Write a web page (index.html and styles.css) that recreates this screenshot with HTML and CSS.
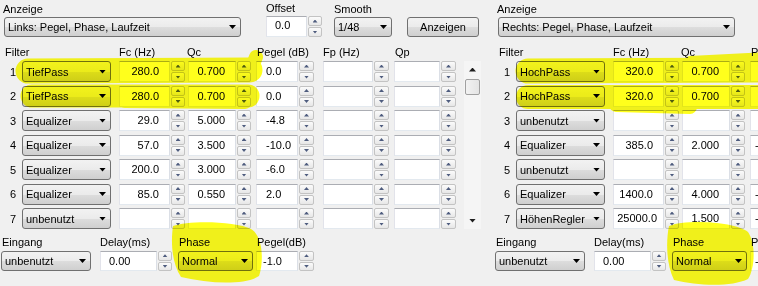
FILE: index.html
```html
<!DOCTYPE html>
<html lang="de">
<head>
<meta charset="utf-8">
<title>Filter</title>
<link rel="stylesheet" href="styles.css">
</head>
<body>
<div class="app">
  <section class="panel">
    <div class="top">
      <div class="field f-anz"><span class="lbl">Anzeige</span><div class="combo w-anz"><span>Links: Pegel, Phase, Laufzeit</span><i class="arr"></i></div></div>
      <div class="field f-off"><span class="lbl">Offset</span><div class="spin s-top"><div class="box w-off pl8">0.0</div><div class="btns"><b class="up"></b><b class="dn"></b></div></div></div>
      <div class="field f-smo"><span class="lbl">Smooth</span><div class="combo w-smo"><span>1/48</span><i class="arr"></i></div></div>
      <button class="btn" type="button">Anzeigen</button>
    </div>
    <div class="hdr"><span class="h-filter">Filter</span><span class="h-fc">Fc (Hz)</span><span class="h-qc">Qc</span><span class="h-pg">Pegel (dB)</span><span class="h-fp">Fp (Hz)</span><span class="h-qp">Qp</span></div>
    <div class="table">
      <div class="rows">
        <div class="row"><span class="num">1</span><div class="combo c-filt"><span>TiefPass</span><i class="arr"></i></div><div class="spin fc"><div class="box r">280.0</div><div class="btns"><b class="up"></b><b class="dn"></b></div></div><div class="spin qc"><div class="box r">0.700</div><div class="btns"><b class="up"></b><b class="dn"></b></div></div><div class="spin pg"><div class="box">0.0</div><div class="btns"><b class="up"></b><b class="dn"></b></div></div><div class="spin fp"><div class="box"></div><div class="btns"><b class="up"></b><b class="dn"></b></div></div><div class="spin qp"><div class="box"></div><div class="btns"><b class="up"></b><b class="dn"></b></div></div></div>
        <div class="row"><span class="num">2</span><div class="combo c-filt"><span>TiefPass</span><i class="arr"></i></div><div class="spin fc"><div class="box r">280.0</div><div class="btns"><b class="up"></b><b class="dn"></b></div></div><div class="spin qc"><div class="box r">0.700</div><div class="btns"><b class="up"></b><b class="dn"></b></div></div><div class="spin pg"><div class="box">0.0</div><div class="btns"><b class="up"></b><b class="dn"></b></div></div><div class="spin fp"><div class="box"></div><div class="btns"><b class="up"></b><b class="dn"></b></div></div><div class="spin qp"><div class="box"></div><div class="btns"><b class="up"></b><b class="dn"></b></div></div></div>
        <div class="row"><span class="num">3</span><div class="combo c-filt"><span>Equalizer</span><i class="arr"></i></div><div class="spin fc"><div class="box r">29.0</div><div class="btns"><b class="up"></b><b class="dn"></b></div></div><div class="spin qc"><div class="box r">5.000</div><div class="btns"><b class="up"></b><b class="dn"></b></div></div><div class="spin pg"><div class="box">-4.8</div><div class="btns"><b class="up"></b><b class="dn"></b></div></div><div class="spin fp"><div class="box"></div><div class="btns"><b class="up"></b><b class="dn"></b></div></div><div class="spin qp"><div class="box"></div><div class="btns"><b class="up"></b><b class="dn"></b></div></div></div>
        <div class="row"><span class="num">4</span><div class="combo c-filt"><span>Equalizer</span><i class="arr"></i></div><div class="spin fc"><div class="box r">57.0</div><div class="btns"><b class="up"></b><b class="dn"></b></div></div><div class="spin qc"><div class="box r">3.500</div><div class="btns"><b class="up"></b><b class="dn"></b></div></div><div class="spin pg"><div class="box">-10.0</div><div class="btns"><b class="up"></b><b class="dn"></b></div></div><div class="spin fp"><div class="box"></div><div class="btns"><b class="up"></b><b class="dn"></b></div></div><div class="spin qp"><div class="box"></div><div class="btns"><b class="up"></b><b class="dn"></b></div></div></div>
        <div class="row"><span class="num">5</span><div class="combo c-filt"><span>Equalizer</span><i class="arr"></i></div><div class="spin fc"><div class="box r">200.0</div><div class="btns"><b class="up"></b><b class="dn"></b></div></div><div class="spin qc"><div class="box r">3.000</div><div class="btns"><b class="up"></b><b class="dn"></b></div></div><div class="spin pg"><div class="box">-6.0</div><div class="btns"><b class="up"></b><b class="dn"></b></div></div><div class="spin fp"><div class="box"></div><div class="btns"><b class="up"></b><b class="dn"></b></div></div><div class="spin qp"><div class="box"></div><div class="btns"><b class="up"></b><b class="dn"></b></div></div></div>
        <div class="row"><span class="num">6</span><div class="combo c-filt"><span>Equalizer</span><i class="arr"></i></div><div class="spin fc"><div class="box r">85.0</div><div class="btns"><b class="up"></b><b class="dn"></b></div></div><div class="spin qc"><div class="box r">0.550</div><div class="btns"><b class="up"></b><b class="dn"></b></div></div><div class="spin pg"><div class="box">2.0</div><div class="btns"><b class="up"></b><b class="dn"></b></div></div><div class="spin fp"><div class="box"></div><div class="btns"><b class="up"></b><b class="dn"></b></div></div><div class="spin qp"><div class="box"></div><div class="btns"><b class="up"></b><b class="dn"></b></div></div></div>
        <div class="row"><span class="num">7</span><div class="combo c-filt"><span>unbenutzt</span><i class="arr"></i></div><div class="spin fc"><div class="box r"></div><div class="btns"><b class="up"></b><b class="dn"></b></div></div><div class="spin qc"><div class="box r"></div><div class="btns"><b class="up"></b><b class="dn"></b></div></div><div class="spin pg"><div class="box"></div><div class="btns"><b class="up"></b><b class="dn"></b></div></div><div class="spin fp"><div class="box"></div><div class="btns"><b class="up"></b><b class="dn"></b></div></div><div class="spin qp"><div class="box"></div><div class="btns"><b class="up"></b><b class="dn"></b></div></div></div>
      </div>
      <div class="vscroll"><i class="sa sa-up"></i><i class="thumb"></i><i class="track"></i><i class="sa sa-dn"></i></div>
    </div>
    <div class="bottom">
      <div class="field f-ein"><span class="lbl">Eingang</span><div class="combo w-ein"><span>unbenutzt</span><i class="arr"></i></div></div>
      <div class="field f-del"><span class="lbl">Delay(ms)</span><div class="spin"><div class="box w-del pl7">0.00</div><div class="btns"><b class="up"></b><b class="dn"></b></div></div></div>
      <div class="field f-pha"><span class="lbl">Phase</span><div class="combo w-pha"><span>Normal</span><i class="arr"></i></div></div>
      <div class="field f-peg"><span class="lbl">Pegel(dB)</span><div class="spin"><div class="box w-peg pl6">-1.0</div><div class="btns"><b class="up"></b><b class="dn"></b></div></div></div>
    </div>
  </section>

  <section class="panel">
    <div class="top">
      <div class="field f-anz"><span class="lbl">Anzeige</span><div class="combo w-anz"><span>Rechts: Pegel, Phase, Laufzeit</span><i class="arr"></i></div></div>
    </div>
    <div class="hdr"><span class="h-filter">Filter</span><span class="h-fc">Fc (Hz)</span><span class="h-qc">Qc</span><span class="h-pg">P</span></div>
    <div class="table">
      <div class="rows">
        <div class="row"><span class="num">1</span><div class="combo c-filt"><span>HochPass</span><i class="arr"></i></div><div class="spin fc"><div class="box r">320.0</div><div class="btns"><b class="up"></b><b class="dn"></b></div></div><div class="spin qc"><div class="box r">0.700</div><div class="btns"><b class="up"></b><b class="dn"></b></div></div><div class="spin pg"><div class="box pr"></div></div></div>
        <div class="row"><span class="num">2</span><div class="combo c-filt"><span>HochPass</span><i class="arr"></i></div><div class="spin fc"><div class="box r">320.0</div><div class="btns"><b class="up"></b><b class="dn"></b></div></div><div class="spin qc"><div class="box r">0.700</div><div class="btns"><b class="up"></b><b class="dn"></b></div></div><div class="spin pg"><div class="box pr"></div></div></div>
        <div class="row"><span class="num">3</span><div class="combo c-filt"><span>unbenutzt</span><i class="arr"></i></div><div class="spin fc"><div class="box r"></div><div class="btns"><b class="up"></b><b class="dn"></b></div></div><div class="spin qc"><div class="box r"></div><div class="btns"><b class="up"></b><b class="dn"></b></div></div><div class="spin pg"><div class="box pr"></div></div></div>
        <div class="row"><span class="num">4</span><div class="combo c-filt"><span>Equalizer</span><i class="arr"></i></div><div class="spin fc"><div class="box r">385.0</div><div class="btns"><b class="up"></b><b class="dn"></b></div></div><div class="spin qc"><div class="box r">2.000</div><div class="btns"><b class="up"></b><b class="dn"></b></div></div><div class="spin pg"><div class="box pr">-</div></div></div>
        <div class="row"><span class="num">5</span><div class="combo c-filt"><span>unbenutzt</span><i class="arr"></i></div><div class="spin fc"><div class="box r"></div><div class="btns"><b class="up"></b><b class="dn"></b></div></div><div class="spin qc"><div class="box r"></div><div class="btns"><b class="up"></b><b class="dn"></b></div></div><div class="spin pg"><div class="box pr"></div></div></div>
        <div class="row"><span class="num">6</span><div class="combo c-filt"><span>Equalizer</span><i class="arr"></i></div><div class="spin fc"><div class="box r">1400.0</div><div class="btns"><b class="up"></b><b class="dn"></b></div></div><div class="spin qc"><div class="box r">4.000</div><div class="btns"><b class="up"></b><b class="dn"></b></div></div><div class="spin pg"><div class="box pr">-</div></div></div>
        <div class="row"><span class="num">7</span><div class="combo c-filt"><span>HöhenRegler</span><i class="arr"></i></div><div class="spin fc"><div class="box r rr">25000.0</div><div class="btns"><b class="up"></b><b class="dn"></b></div></div><div class="spin qc"><div class="box r">1.500</div><div class="btns"><b class="up"></b><b class="dn"></b></div></div><div class="spin pg"><div class="box pr">-</div></div></div>
      </div>
    </div>
    <div class="bottom">
      <div class="field f-ein"><span class="lbl">Eingang</span><div class="combo w-ein"><span>unbenutzt</span><i class="arr"></i></div></div>
      <div class="field f-del"><span class="lbl">Delay(ms)</span><div class="spin"><div class="box w-del pl7">0.00</div><div class="btns"><b class="up"></b><b class="dn"></b></div></div></div>
      <div class="field f-pha"><span class="lbl">Phase</span><div class="combo w-pha"><span>Normal</span><i class="arr"></i></div></div>
      <div class="field f-peg"><span class="lbl">P</span><div class="spin"><div class="box w-peg pl4">-</div></div></div>
    </div>
  </section>
</div>

<svg class="marker" width="758" height="286" viewBox="0 0 758 286" aria-hidden="true">
  <g fill="none" stroke="#ffff1c" stroke-linecap="round" stroke-linejoin="round">
    <path d="M28 71 L250 70" stroke-width="25"/>
    <path d="M250 72 L256 57" stroke-width="14"/>
    <path d="M32 96 L248 96" stroke-width="23"/>
    <path d="M125 102 L245 103" stroke-width="12"/>
    <path d="M528 71 L770 70" stroke-width="25"/>
    <path d="M690 61 L770 57" stroke-width="10"/>
    <path d="M528 97 L770 97" stroke-width="24"/>
    <path d="M616 105 L690 107" stroke-width="14"/>
  </g>
  <g fill="#ffff1c">
    <path d="M173 226 C188 220 236 221 251 229 C263 236 264 262 259 276 C246 285 210 284 181 277 C171 262 171 240 173 226 Z"/>
    <path d="M669 226 C684 219 735 221 748 232 C756 244 755 268 748 279 C732 287 698 286 674 280 C666 264 666 240 669 226 Z"/>
  </g>
</svg>
</body>
</html>
```

FILE: styles.css
```css
html, body {
  margin: 0;
  padding: 0;
}

body {
  width: 758px;
  height: 286px;
  overflow: hidden;
  position: relative;
  background: #f0f0f0;
  color: #000;
  font-family: "Liberation Sans", Arial, sans-serif;
  font-size: 11px;
}

.app {
  display: flex;
}

.panel {
  width: 494px;
  flex: none;
}

.panel + .panel {
  width: 264px;
  overflow: hidden;
}

/* generic field: label above control */
.field {
  display: flex;
  flex-direction: column;
  flex: none;
}

.lbl {
  display: block;
  height: 14px;
  line-height: 14px;
  margin-bottom: 1px;
  white-space: nowrap;
}

/* top area */
.top {
  display: flex;
  align-items: flex-end;
  padding-top: 2px;
  height: 35px;
}

.f-anz { margin-left: 3px; }
.f-anz .combo { margin-left: 1px; }
.w-anz { width: 237px; }
.f-off { margin-left: 25px; }
.f-smo { margin-left: 12px; }
.w-smo { width: 58px; }
.w-off { width: 41px; }

.s-top { height: 19px; }
.s-top .box { line-height: 17px; }

.btn {
  flex: none;
  margin-left: 15px;
  width: 72px;
  height: 20px;
  padding: 0;
  border: 1px solid #707070;
  border-radius: 3px;
  background: linear-gradient(#f2f2f2 0%, #ebebeb 50%, #dddddd 51%, #cfcfcf 100%);
  font: inherit;
  color: #000;
}

/* combobox */
.combo {
  box-sizing: border-box;
  height: 20px;
  display: flex;
  align-items: center;
  padding-left: 3px;
  border: 1px solid #707070;
  border-radius: 3px;
  background: linear-gradient(#f2f2f2 0%, #ebebeb 50%, #dddddd 51%, #cfcfcf 100%);
  white-space: nowrap;
  overflow: hidden;
  flex: none;
}

.combo .arr {
  margin-left: auto;
  margin-right: 4px;
  flex: none;
  width: 7px;
  height: 4px;
  background: #000;
  clip-path: polygon(0 0, 100% 0, 50% 100%);
}

/* spin edit */
.spin {
  display: flex;
  gap: 1px;
  height: 21px;
  flex: none;
}

.box {
  box-sizing: border-box;
  flex: none;
  height: 100%;
  border: 1px solid;
  border-color: #abadb3 #dbdfe6 #e3e9ef #e2e3ea;
  background: #fff;
  line-height: 19px;
  padding-left: 9px;
  white-space: nowrap;
  overflow: hidden;
}

.box.r {
  text-align: right;
  padding-left: 0;
  padding-right: 10px;
}

.box.rr { padding-right: 6px; }
.box.pr { padding-left: 4px; }
.pl8 { padding-left: 8px; }
.pl7 { padding-left: 8px; }
.pl6 { padding-left: 6px; }
.pl4 { padding-left: 4px; }

.btns {
  display: flex;
  flex-direction: column;
  flex: none;
  gap: 1px;
  width: 14px;
}

.btns b {
  flex: 1;
  display: flex;
  align-items: center;
  justify-content: center;
  border: 1px solid #c3c3c3;
  border-radius: 2px;
  background: linear-gradient(#fbfbfb, #e7e7e7);
}

.btns b::before {
  content: "";
  width: 5px;
  height: 3px;
  background: #4e5c7e;
}

.btns .up::before { clip-path: polygon(50% 0, 100% 100%, 0 100%); }
.btns .dn::before { clip-path: polygon(0 0, 100% 0, 50% 100%); }

/* header row */
.hdr {
  display: flex;
  margin-top: 8px;
  margin-left: 5px;
  height: 14px;
  line-height: 14px;
  white-space: nowrap;
}

.hdr span { flex: none; }
.h-filter { width: 114px; }
.h-fc { width: 68px; }
.h-qc { width: 70px; }
.h-pg { width: 66px; }
.h-fp { width: 72px; }

/* table */
.table {
  display: flex;
  margin-top: 2px;
}

.rows {
  display: flex;
  flex-direction: column;
  flex: none;
  gap: 3.5px;
}

.row {
  display: flex;
  align-items: center;
  height: 21px;
}

.num {
  width: 16px;
  text-align: right;
  margin-right: 6px;
  flex: none;
}

.c-filt {
  width: 89px;
  height: 21px;
}

.fc { margin-left: 8px; }
.fc .box { width: 51px; }
.qc { margin-left: 3px; }
.qc .box { width: 48px; }
.pg { margin-left: 5px; }
.pg .box { width: 42px; }
.pg .btns { width: 15px; }
.fp { margin-left: 9px; }
.fp .box { width: 50px; }
.fp .btns { width: 15px; }
.qp { margin-left: 5px; }
.qp .box { width: 46px; }
.qp .btns { width: 15px; }

/* scrollbar */
.vscroll {
  margin-left: 8px;
  width: 17px;
  flex: none;
  display: flex;
  flex-direction: column;
  align-items: center;
  background: #f5f5f5;
}

.sa {
  height: 17px;
  width: 100%;
  display: flex;
  align-items: center;
  justify-content: center;
}

.sa::before {
  content: "";
  width: 7px;
  height: 4px;
  background: #1e1e1e;
}

.sa-up::before { clip-path: polygon(50% 0, 100% 100%, 0 100%); }
.sa-dn::before { clip-path: polygon(0 0, 100% 0, 50% 100%); }

.thumb {
  box-sizing: border-box;
  margin-top: 1px;
  width: 15px;
  height: 16px;
  border: 1px solid #a0a0a0;
  border-radius: 2px;
  background: linear-gradient(90deg, #f2f2f2, #e4e4e4);
}

.track { flex: 1; }

/* bottom */
.bottom {
  display: flex;
  margin-top: 6px;
}

.bottom .lbl { margin-bottom: 2px; }
.bottom .spin { height: 20px; }
.bottom .box { line-height: 18px; }

.f-ein { margin-left: 1px; }
.f-ein .lbl { margin-left: 1px; }
.w-ein { width: 90px; }
.f-del { margin-left: 9px; }
.w-del { width: 57px; }
.f-pha { margin-left: 6px; }
.f-pha .lbl { margin-left: 1px; }
.w-pha { width: 75px; }
.f-peg { margin-left: 3px; }
.f-peg .lbl { margin-left: 1px; }
.w-peg { width: 42px; }
.f-peg .btns { width: 15px; }

/* highlighter marks drawn over the dialog */
.marker {
  position: absolute;
  left: 0;
  top: 0;
  pointer-events: none;
  mix-blend-mode: multiply;
}
```
